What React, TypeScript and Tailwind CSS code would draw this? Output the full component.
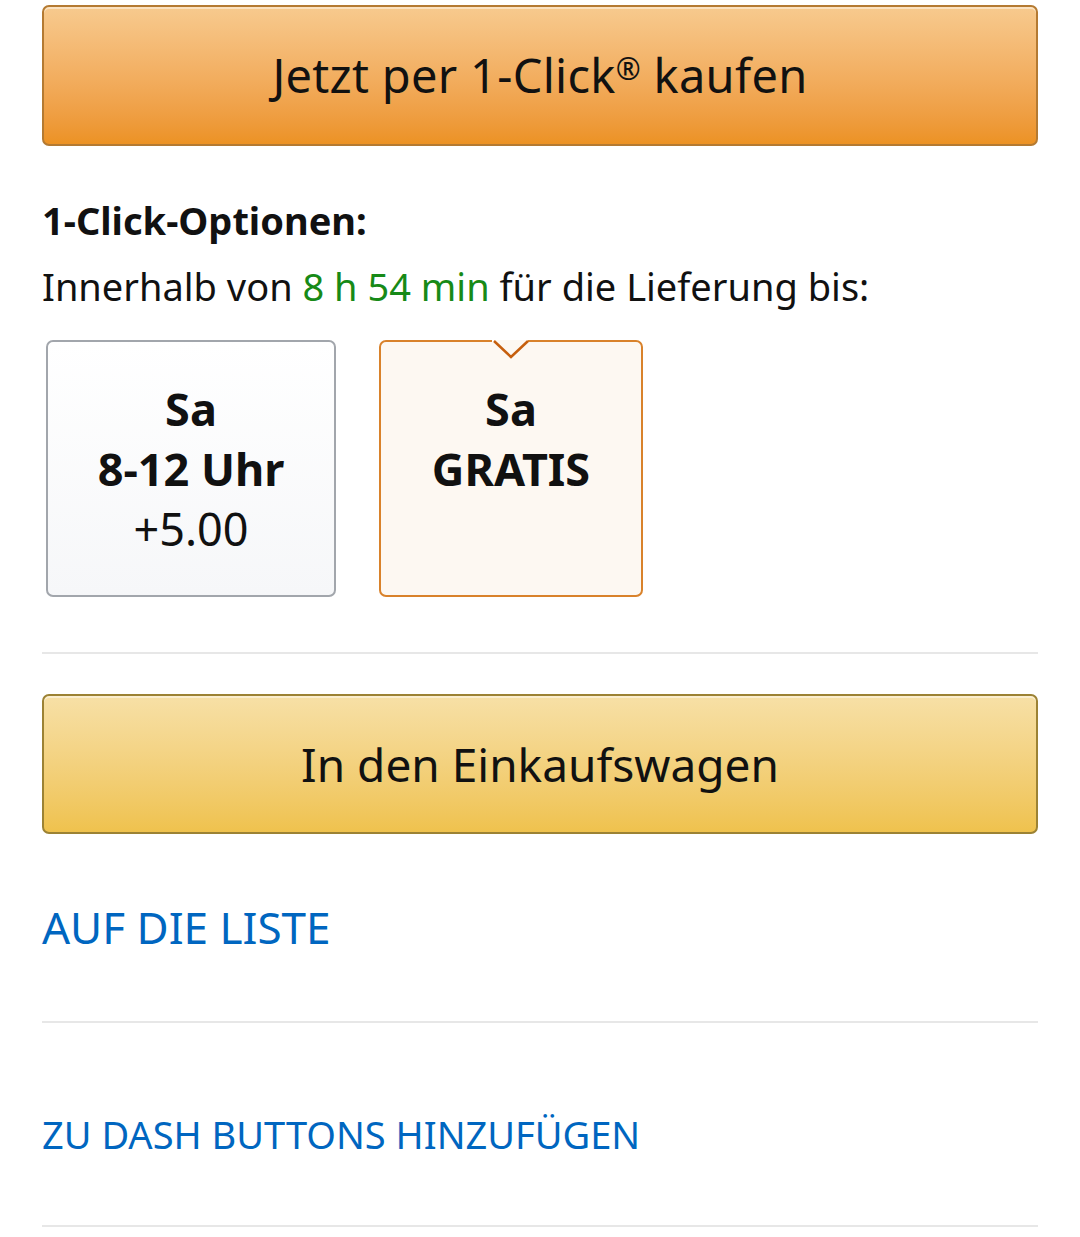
const font = { fontFamily: '"Noto Sans", "Open Sans", sans-serif' };

function Divider() {
  return <div className="h-[2px] w-full bg-[#e7e7e7]" />;
}

export default function App() {
  return (
    <div className="w-[1080px] bg-white text-[#111]" style={font}>
      <div className="px-[42px] pt-[5px]">
        {/* 1-Click button */}
        <button className="flex h-[141px] w-full items-center justify-center rounded-[7px] border-2 border-[#b47a32] bg-gradient-to-b from-[#f7ca8e] to-[#ec9223] text-[47px] tracking-[0.3px] text-[#111] shadow-[inset_0_2px_0_rgba(255,255,255,0.45)]">
          <span>
            Jetzt per 1-Click<sup className="text-[30px] -top-[0.45em]">®</sup> kaufen
          </span>
        </button>

        <h3 className="mt-[50px] text-[38px] font-bold leading-[48px]">1-Click-Optionen:</h3>
        <p className="mt-[18px] text-[38px] leading-[48px]">
          Innerhalb von <span className="text-[#178a17]">8 h 54 min</span> für die Lieferung bis:
        </p>

        {/* delivery options */}
        <div className="mt-[30px] flex gap-[43px] pl-[4px]">
          <div className="flex h-[257px] w-[290px] flex-col items-center rounded-[7px] border-2 border-[#a2a6ac] bg-gradient-to-b from-white to-[#f6f7f9] pt-[37px] text-[45px] leading-[60px]">
            <span className="font-bold">Sa</span>
            <span className="font-bold">8-12 Uhr</span>
            <span>+5.00</span>
          </div>
          <div className="relative flex h-[257px] w-[264px] flex-col items-center rounded-[7px] border-2 border-[#d9822b] bg-[#fdf8f2] pt-[37px] text-[45px] leading-[60px]">
            <svg className="absolute left-1/2 -top-[2px] -translate-x-1/2" width="38" height="20" viewBox="0 0 38 20">
              <path d="M0 1 L36 1" stroke="white" strokeWidth="2" />
              <path d="M2 0 L19 17 L36 0 Z" fill="#fdf8f2" />
              <path d="M2 1 L19 17 L36 1" fill="none" stroke="#c65f0e" strokeWidth="2.5" />
            </svg>
            <span className="font-bold">Sa</span>
            <span className="font-bold">GRATIS</span>
          </div>
        </div>

        <div className="mt-[55px]">
          <Divider />
        </div>

        {/* cart button */}
        <button className="mt-[40px] flex h-[140px] w-full items-center justify-center rounded-[7px] border-2 border-[#9c8234] bg-gradient-to-b from-[#f7e0a6] to-[#efc24d] text-[46px] text-[#111] shadow-[inset_0_2px_0_rgba(255,255,255,0.45)]">
          In den Einkaufswagen
        </button>

        <div className="flex h-[187px] items-center pb-[2px]">
          <span className="text-[44px] text-[#0066c0]">AUF DIE LISTE</span>
        </div>
        <Divider />
        <div className="flex h-[202px] items-center pt-[20px]">
          <span className="text-[38px] text-[#0066c0]">ZU DASH BUTTONS HINZUFÜGEN</span>
        </div>
        <Divider />
      </div>
    </div>
  );
}
